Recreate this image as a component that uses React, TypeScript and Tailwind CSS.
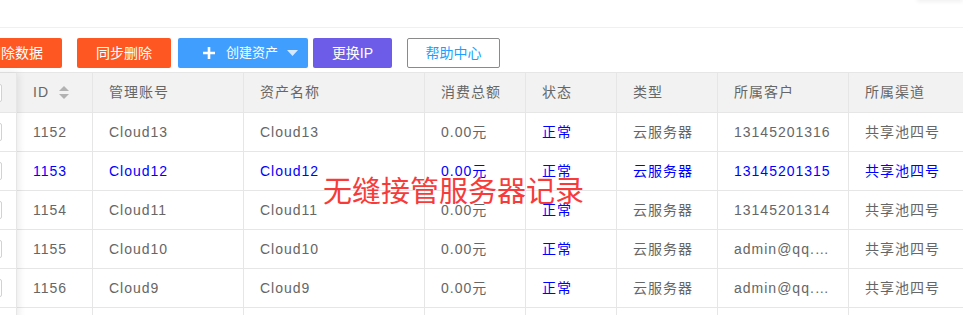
import React from "react";

interface Row {
  id: string;
  account: string;
  name: string;
  amount: string;
  type: string;
  customer: string;
  channel: string;
  active?: boolean;
}

const rows: Row[] = [
  { id: "1152", account: "Cloud13", name: "Cloud13", amount: "0.00元", type: "云服务器", customer: "13145201316", channel: "共享池四号" },
  { id: "1153", account: "Cloud12", name: "Cloud12", amount: "0.00元", type: "云服务器", customer: "13145201315", channel: "共享池四号", active: true },
  { id: "1154", account: "Cloud11", name: "Cloud11", amount: "0.00元", type: "云服务器", customer: "13145201314", channel: "共享池四号" },
  { id: "1155", account: "Cloud10", name: "Cloud10", amount: "0.00元", type: "云服务器", customer: "admin@qq.com", channel: "共享池四号" },
  { id: "1156", account: "Cloud9", name: "Cloud9", amount: "0.00元", type: "云服务器", customer: "admin@qq.com", channel: "共享池四号" },
];

const cols = ["w-[76px]", "w-[151px]", "w-[181px]", "w-[101px]", "w-[91px]", "w-[101px]", "w-[131px]", "w-[140px]"];

function SortIcon() {
  return (
    <svg width="10" height="13" viewBox="0 0 10 13" className="ml-[10px]">
      <path d="M5 0 L10 5 L0 5 Z" fill="#b2b2b2" />
      <path d="M0 8 L10 8 L5 13 Z" fill="#b2b2b2" />
    </svg>
  );
}

function Checkbox() {
  return <span className="block w-[18px] h-[18px] rounded-[2px] border border-[#d2d2d2] bg-white" />;
}

export default function App() {
  const headers = ["ID", "管理账号", "资产名称", "消费总额", "状态", "类型", "所属客户", "所属渠道"];
  return (
    <div className="relative w-[963px] h-[315px] overflow-hidden bg-white font-['Liberation_Sans','Noto_Sans_CJK_SC',sans-serif] text-[14px] text-[#666]">
      <div className="relative h-[28px] border-b border-[#f0f0f0]">
        <div className="absolute right-0 -top-[10px] w-[46px] h-[10px] shadow-[0_2px_4px_rgba(0,0,0,0.06)]" />
      </div>

      <div className="-ml-[32px] mt-[10px] flex h-[30px] text-white">
        <button className="w-[94px] h-full rounded-[2px] bg-[#ff5722]">删除数据</button>
        <button className="ml-[15px] w-[94px] h-full rounded-[2px] bg-[#ff5722]">同步删除</button>
        <button className="ml-[7px] w-[130px] h-full rounded-[2px] bg-[#409eff] flex items-center pl-[25px]">
          <svg width="12" height="12" viewBox="0 0 12 12">
            <path d="M6 0 V12 M0 6 H12" stroke="#fff" strokeWidth="2.6" />
          </svg>
          <span className="ml-[11px] text-[13px]">创建资产</span>
          <svg width="11" height="6" viewBox="0 0 11 6" className="ml-[9px]">
            <path d="M0 0 H11 L5.5 6 Z" fill="#d6e8fb" />
          </svg>
        </button>
        <button className="ml-[5px] w-[79px] h-full rounded-[2px] bg-[#6c5ce7]">更换IP</button>
        <button className="ml-[15px] w-[93px] h-full rounded-[2px] border border-[#8a8a8a] bg-white text-[#1e9fff]">帮助中心</button>
      </div>

      <div className="-ml-[31px] mt-[4px] flex border-t border-[#e6e6e6] tracking-[1px]">
        <div className="relative z-10 w-[48px] shrink-0 bg-white border-r border-[#e6e6e6] shadow-[1px_0_8px_rgba(0,0,0,0.1)]">
          <div className="h-[40px] bg-[#f2f2f2] border-b border-[#e6e6e6] flex items-center justify-center">
            <Checkbox />
          </div>
          {rows.map((r) => (
            <div key={r.id} className="h-[39px] border-b border-[#e6e6e6] flex items-center justify-center">
              <Checkbox />
            </div>
          ))}
          <div className="h-[39px]" />
        </div>

        <div className="flex flex-col">
          <div className="flex h-[40px] bg-[#f2f2f2] border-b border-[#e6e6e6]">
            {headers.map((h, i) => (
              <div key={h} className={`${cols[i]} shrink-0 flex items-center pl-[16px] border-r border-[#e6e6e6]`}>
                {h}
                {i === 0 && <SortIcon />}
              </div>
            ))}
          </div>
          {rows.map((r) => {
            const values = [r.id, r.account, r.name, r.amount, "正常", r.type, r.customer, r.channel];
            return (
              <div key={r.id} className={`flex h-[39px] border-b border-[#e6e6e6] ${r.active ? "text-[#0000ff]" : ""}`}>
                {values.map((v, i) => (
                  <div
                    key={i}
                    className={`${cols[i]} shrink-0 flex items-center pl-[16px] pr-[15px] border-r border-[#e6e6e6] ${i === 4 ? "text-[#0000ff]" : ""}`}
                  >
                    <span className="truncate">{v}</span>
                  </div>
                ))}
              </div>
            );
          })}
          <div className="flex h-[39px]">
            {cols.map((c, i) => (
              <div key={i} className={`${c} shrink-0 border-r border-[#e6e6e6]`} />
            ))}
          </div>
        </div>
      </div>

      <div className="absolute left-[323px] top-[175px] text-[29px] leading-none text-[#f73b3b] font-['Noto_Sans_CJK_SC',sans-serif]">
        无缝接管服务器记录
      </div>
    </div>
  );
}
